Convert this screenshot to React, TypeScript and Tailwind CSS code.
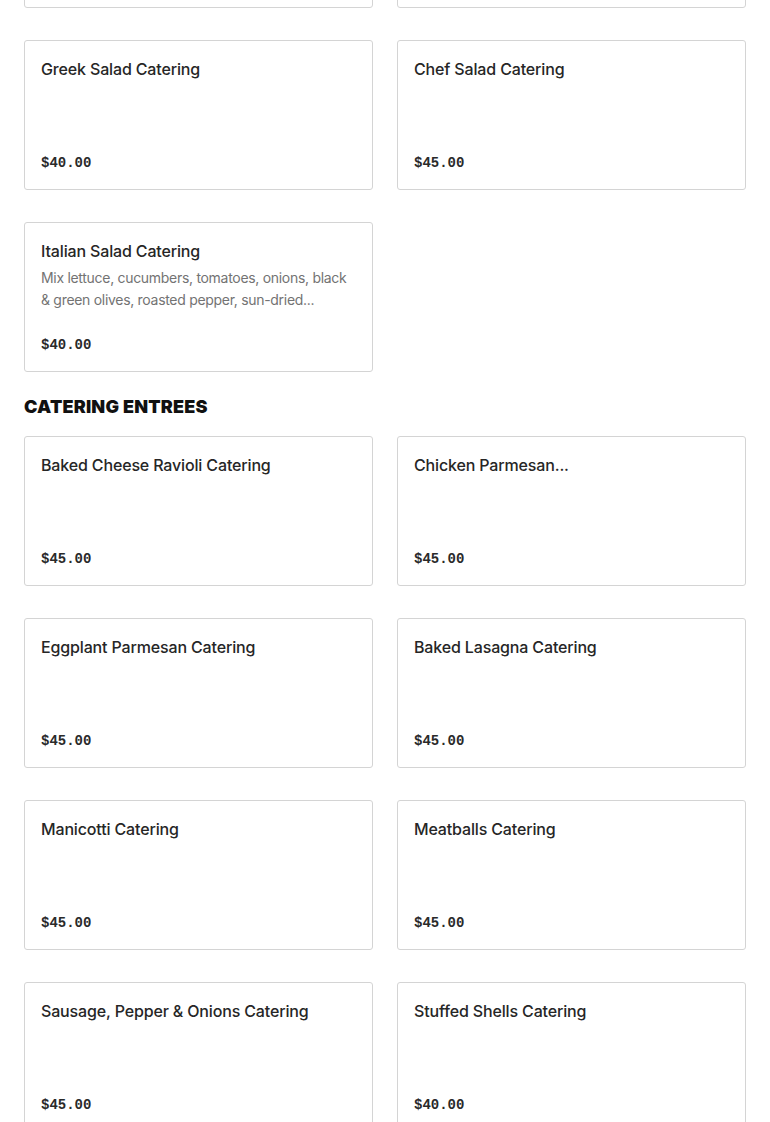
import React from 'react';

type Item = {
  name: string;
  price: string;
  description?: string;
};

const salads: Item[] = [
  { name: 'Tossed Salad Catering', price: '$35.00' },
  { name: 'Caesar Salad Catering', price: '$40.00' },
  { name: 'Greek Salad Catering', price: '$40.00' },
  { name: 'Chef Salad Catering', price: '$45.00' },
  {
    name: 'Italian Salad Catering',
    price: '$40.00',
    description: 'Mix lettuce, cucumbers, tomatoes, onions, black & green olives, roasted pepper, sun-dried...',
  },
];

const entrees: Item[] = [
  { name: 'Baked Cheese Ravioli Catering', price: '$45.00' },
  { name: 'Chicken Parmesan...', price: '$45.00' },
  { name: 'Eggplant Parmesan Catering', price: '$45.00' },
  { name: 'Baked Lasagna Catering', price: '$45.00' },
  { name: 'Manicotti Catering', price: '$45.00' },
  { name: 'Meatballs Catering', price: '$45.00' },
  { name: 'Sausage, Pepper & Onions Catering', price: '$45.00' },
  { name: 'Stuffed Shells Catering', price: '$40.00' },
];

const MenuCard = ({ item }: { item: Item }) => {
  return (
    <div className="flex flex-col h-[150px] p-4 bg-white border border-[#d4d4d4] rounded-[3px]">
      <h3 className="text-[16px] leading-6 font-medium text-[#262626] tracking-[-0.15px] truncate">
        {item.name}
      </h3>
      {item.description && (
        <p className="mt-1 text-[14px] leading-[22px] text-[#737373] tracking-[-0.3px]">
          {item.description}
        </p>
      )}
      <p className="mt-auto text-[14px] leading-5 font-bold text-[#2a2a2a] font-['Liberation_Mono',monospace]">
        {item.price}
      </p>
    </div>
  );
};

const App = () => {
  return (
    <div className="min-h-screen bg-white font-['Inter',sans-serif] overflow-hidden">
      <div className="px-6 -mt-[142px]">
        <div className="grid grid-cols-2 gap-x-6 gap-y-8">
          {salads.map((item) => (
            <MenuCard key={item.name} item={item} />
          ))}
        </div>

        <h2 className="mt-[21px] mb-[15px] text-[18px] leading-7 font-black uppercase text-[#111] tracking-[0.2px]">
          Catering Entrees
        </h2>

        <div className="grid grid-cols-2 gap-x-6 gap-y-8 pb-12">
          {entrees.map((item) => (
            <MenuCard key={item.name} item={item} />
          ))}
        </div>
      </div>
    </div>
  );
};

export default App;
